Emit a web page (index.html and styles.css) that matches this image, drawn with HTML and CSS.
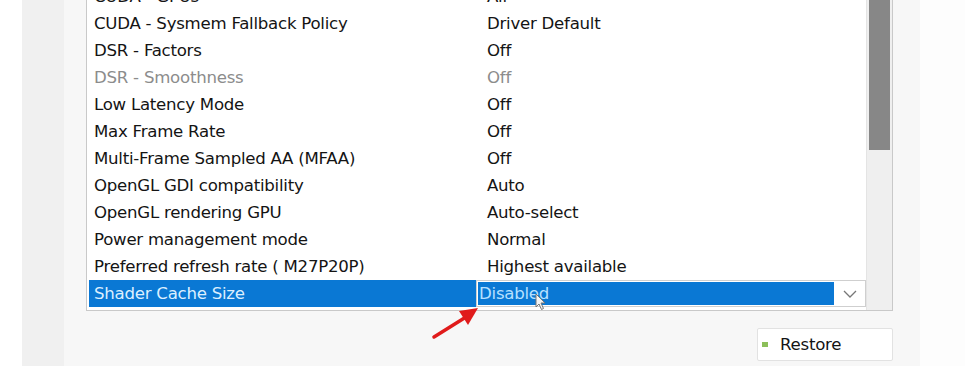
FILE: index.html
```html
<!DOCTYPE html>
<html>
<head>
<meta charset="utf-8">
<link rel="stylesheet" href="styles.css">
</head>
<body>
<div class="stage">
  <div class="edge"></div>
  <div class="side"></div>
  <div class="panel">
    <div class="listbox">
      <div class="rows">
        <div class="row"><span class="name">CUDA - GPUs</span><span class="val">All</span></div>
        <div class="row"><span class="name">CUDA - Sysmem Fallback Policy</span><span class="val">Driver Default</span></div>
        <div class="row"><span class="name">DSR - Factors</span><span class="val">Off</span></div>
        <div class="row dim"><span class="name">DSR - Smoothness</span><span class="val">Off</span></div>
        <div class="row"><span class="name">Low Latency Mode</span><span class="val">Off</span></div>
        <div class="row"><span class="name">Max Frame Rate</span><span class="val">Off</span></div>
        <div class="row"><span class="name">Multi-Frame Sampled AA (MFAA)</span><span class="val">Off</span></div>
        <div class="row"><span class="name">OpenGL GDI compatibility</span><span class="val">Auto</span></div>
        <div class="row"><span class="name">OpenGL rendering GPU</span><span class="val">Auto-select</span></div>
        <div class="row"><span class="name">Power management mode</span><span class="val">Normal</span></div>
        <div class="row"><span class="name">Preferred refresh rate ( M27P20P)</span><span class="val">Highest available</span></div>
        <div class="row sel">
          <span class="name">Shader Cache Size</span>
          <div class="combo">
            <span class="combo-text">Disabled</span>
            <span class="combo-btn">
              <svg width="14" height="8" viewBox="0 0 14 8"><path d="M1 1 L7 7 L13 1" fill="none" stroke="#777" stroke-width="1.3"/></svg>
            </span>
          </div>
        </div>
        <div class="gap"></div>
      </div>
      <div class="scroll"><div class="thumb"></div></div>
    </div>
    <div class="actions">
      <button class="restore"><span class="dot"></span>Restore</button>
    </div>
  </div>
  <div class="edge-right"></div>
  <svg class="arrow" width="60" height="40" viewBox="0 0 60 40">
    <line x1="4" y1="36" x2="36" y2="16" stroke="#e01b1b" stroke-width="3.5" stroke-linecap="round"/>
    <polygon points="48,7 29,10 38,24" fill="#e01b1b"/>
  </svg>
  <svg class="cursor" width="12" height="18" viewBox="0 0 12 18">
    <path d="M1 1 L1 14 L4 11 L6.5 16.5 L8.5 15.5 L6 10 L10 10 Z" fill="#f4f4f4" stroke="#777" stroke-width="1"/>
  </svg>
</div>
</body>
</html>
```
FILE: styles.css
```css
html, body {
  margin: 0;
  padding: 0;
  background: #ffffff;
}
body {
  width: 965px;
  height: 366px;
  overflow: hidden;
  font-family: "DejaVu Sans", "Noto Sans", sans-serif;
}
.stage {
  position: relative;
  display: flex;
  width: 965px;
  height: 366px;
}
.edge {
  width: 22px;
  background: #ffffff;
}
.side {
  width: 42px;
  background: #f0f0f0;
}
.panel {
  width: 856px;
  background: #f7f7f7;
  padding: 0 27px 0 22px;
  box-sizing: border-box;
  display: flex;
  flex-direction: column;
}
.edge-right {
  flex: 1;
  background: #fdfdfd;
}
.listbox {
  height: 311px;
  display: flex;
  border: 1px solid #c9c9c9;
  border-top: none;
  background: #ffffff;
  box-sizing: border-box;
}
.rows {
  flex: 1;
  display: flex;
  flex-direction: column;
  justify-content: flex-end;
  overflow: hidden;
  padding-left: 2px;
}
.row {
  height: 27px;
  flex: none;
  display: flex;
  align-items: center;
  font-size: 16.6px;
  color: #141414;
  letter-spacing: -0.25px;
}
.row .name {
  width: 387px;
  padding-left: 5px;
  box-sizing: border-box;
  white-space: nowrap;
}
.row .val {
  padding-left: 11px;
  white-space: nowrap;
}
.row.dim {
  color: #8c8c8c;
}
.row.sel .name {
  background: #0a78d4;
  color: #dcefff;
  height: 27px;
  line-height: 27px;
}
.combo {
  flex: 1;
  height: 27px;
  display: flex;
  border: 1px solid #cfcfcf;
  box-sizing: border-box;
  background: #ffffff;
}
.combo-text {
  flex: 1;
  background: #0a78d4;
  color: #b6e0ff;
  line-height: 24px;
  padding-left: 1px;
  margin: 1px 0 1px 1px;
}
.combo-btn {
  width: 31px;
  display: flex;
  align-items: center;
  justify-content: center;
}
.gap {
  height: 3px;
  flex: none;
}
.scroll {
  width: 26px;
  background: #efefef;
  border-left: 1px solid #e4e4e4;
  padding: 0 2px;
  box-sizing: border-box;
}
.thumb {
  height: 150px;
  background: #878787;
}
.actions {
  display: flex;
  justify-content: flex-end;
  margin-top: 17px;
}
.restore {
  width: 136px;
  height: 33px;
  background: #ffffff;
  border: 1px solid #e2e2e2;
  border-radius: 2px;
  display: flex;
  align-items: center;
  padding: 0 0 0 4px;
  font-family: "DejaVu Sans", sans-serif;
  font-size: 16.6px;
  color: #141414;
  letter-spacing: -0.25px;
}
.dot {
  width: 6px;
  height: 5px;
  background: #8cbf5a;
  margin-right: 12px;
}
.arrow {
  position: absolute;
  left: 430px;
  top: 301px;
}
.cursor {
  position: absolute;
  left: 535px;
  top: 293px;
}
```
